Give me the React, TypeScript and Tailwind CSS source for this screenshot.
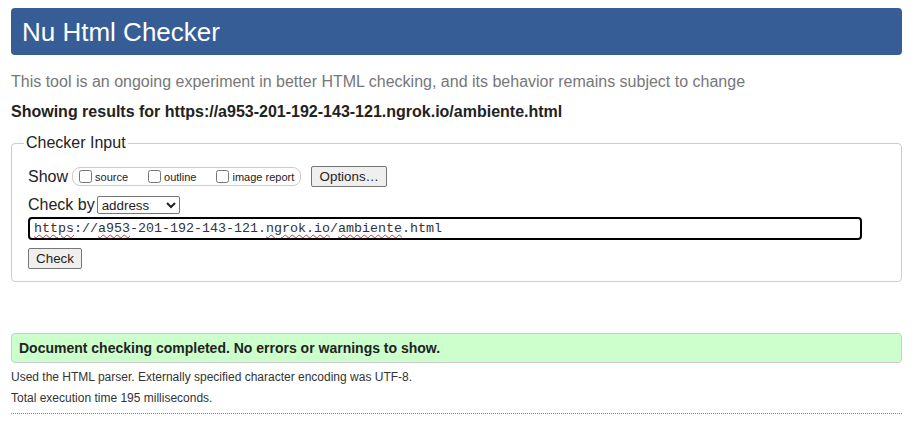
import React from 'react'

const spell = 'underline decoration-wavy decoration-[#e0322f] decoration-[1px] underline-offset-[2px]'

export default function App() {
  return (
    <div className="min-h-[437px] bg-white pt-[8px] pl-[11px] pr-[14px] font-['Liberation_Sans',Arial,sans-serif] text-[#222]">
      <header className="flex h-[47px] items-center rounded-[4px] bg-[#375d96] px-[11px]">
        <h1 className="text-[26px] leading-none text-white">Nu Html Checker</h1>
      </header>

      <p className="mt-[18px] text-[16px] leading-[18px] text-[#777]">
        This tool is an ongoing experiment in better HTML checking, and its behavior remains subject to change
      </p>
      <p className="mt-[12px] text-[16px] font-bold leading-[18px]">
        Showing results for https://a953-201-192-143-121.ngrok.io/ambiente.html
      </p>

      <fieldset className="mt-[13px] rounded-[4px] border border-[#ccc] px-[16px] pb-[11px]">
        <legend className="ml-[-4px] px-[2px] text-[16px] leading-[18px]">Checker Input</legend>

        <div className="mt-[14px] flex h-[21px] items-center">
          <span className="text-[16px]">Show</span>
          <span className="ml-[4px] inline-flex h-[19px] items-center rounded-[8px] border border-[#ccc] pl-[2px] pr-[6px] text-[11px]">
            <label className="inline-flex items-center">
              <input type="checkbox" className="m-0 ml-[4px] mr-[3px] h-[13px] w-[13px]" />
              <span className="pt-[2px]">source</span>
            </label>
            <label className="ml-[16px] inline-flex items-center">
              <input type="checkbox" className="m-0 ml-[4px] mr-[3px] h-[13px] w-[13px]" />
              <span className="pt-[2px]">outline</span>
            </label>
            <label className="ml-[16px] inline-flex items-center">
              <input type="checkbox" className="m-0 ml-[4px] mr-[3px] h-[13px] w-[13px]" />
              <span className="pt-[2px]">image report</span>
            </label>
          </span>
          <button className="ml-[10px] h-[21px] w-[76px] rounded-[2px] border border-[#767676] bg-[#efefef] text-[13.33px]">
            Options…
          </button>
        </div>

        <div className="mt-[9px] flex h-[18px] items-center">
          <span className="text-[16px]">Check by</span>
          <select
            defaultValue="address"
            className="ml-[2px] h-[18px] w-[83px] rounded-[2px] border border-[#767676] bg-white text-[13.33px]"
          >
            <option value="address">address</option>
            <option value="file">file upload</option>
            <option value="text">text input</option>
          </select>
        </div>

        <div className="mt-[3px] flex h-[23px] w-[834px] items-center rounded-[4px] border-2 border-black px-[4px] font-['Liberation_Mono','Courier_New',monospace] text-[13.33px] leading-[16px] text-[#333]">
          <span>
            <span className={spell}>https</span>://<span className={spell}>a953</span>-201-192-143-121.
            <span className={spell}>ngrok.io</span>/<span className={spell}>ambiente</span>.html
          </span>
        </div>

        <button className="mt-[8px] h-[21px] w-[54px] rounded-[2px] border border-[#767676] bg-[#efefef] text-[13.33px]">
          Check
        </button>
      </fieldset>

      <div className="mt-[51px] flex h-[30px] items-center rounded-[4px] border border-[#ccc] bg-[#ccffcc] px-[7px] text-[14px] font-bold">
        Document checking completed. No errors or warnings to show.
      </div>

      <p className="mt-[7px] text-[12px] leading-[14px] text-[#333]">
        Used the HTML parser. Externally specified character encoding was UTF-8.
      </p>
      <p className="mt-[7px] text-[12px] leading-[14px] text-[#333]">Total execution time 195 milliseconds.</p>

      <hr className="mt-[8px] border-t border-dotted border-[#888]" />
    </div>
  )
}
